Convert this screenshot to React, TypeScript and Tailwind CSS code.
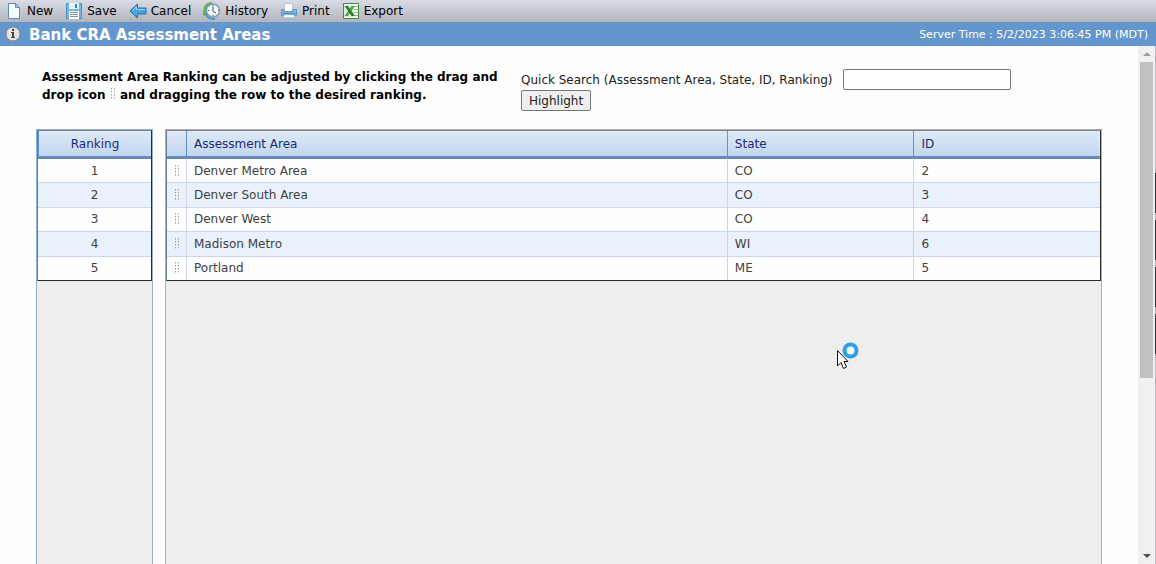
import type { ReactNode } from "react";

const areas = [
  { name: "Denver Metro Area", state: "CO", id: 2 },
  { name: "Denver South Area", state: "CO", id: 3 },
  { name: "Denver West", state: "CO", id: 4 },
  { name: "Madison Metro", state: "WI", id: 6 },
  { name: "Portland", state: "ME", id: 5 },
];

function NewIcon() {
  return (
    <svg width="18" height="18" viewBox="0 0 18 18" aria-hidden="true">
      <path d="M3.5 1.5h7l4 4v11h-11z" fill="#f6fbff" stroke="#5b8fb5" />
      <path d="M10.5 1.5v4h4z" fill="#a9cfe8" stroke="#5b8fb5" />
    </svg>
  );
}

function SaveIcon() {
  return (
    <svg width="18" height="18" viewBox="0 0 18 18" aria-hidden="true">
      <path d="M1.5 1.5h15v15h-15z" fill="#6fb6e2" stroke="#4a93c4" />
      <rect x="4" y="1" width="10" height="6" fill="#e4f2fa" />
      <rect x="10" y="2" width="2" height="4" fill="#3585bd" />
      <rect x="4" y="9" width="10" height="8" fill="#fff" />
      <path d="M5 10.5h8M5 12.5h8M5 14.5h8" stroke="#8b9299" />
    </svg>
  );
}

function CancelIcon() {
  return (
    <svg width="18" height="18" viewBox="0 0 18 18" aria-hidden="true">
      <path d="M1 9l7.5-7v4H17v6H8.5v4z" fill="#4ba3df" stroke="#2473ad" strokeLinejoin="round" />
      <path d="M3.5 8.5l4-3.500v2.500h8.500" fill="none" stroke="#9ed4f5" />
    </svg>
  );
}

function HistoryIcon() {
  return (
    <svg width="18" height="18" viewBox="0 0 18 18" aria-hidden="true">
      <path d="M9 .8C4 0 .8 4 1 8.500L.5 13l5-.5z" fill="#62bd4a" stroke="#398b2d" strokeWidth=".6" />
      <path d="M3 12c1 4 5 5.500 9 4.500" fill="none" stroke="#3e98d0" strokeWidth="2" />
      <circle cx="10" cy="8.500" r="6.500" fill="#f5f8fa" stroke="#7c9eb3" strokeWidth="1.500" />
      <path d="M10 4.500v5l3 1.500M10 3v1M15 8.500h1M10 13v1M5 8.500h1" fill="none" stroke="#34556b" />
    </svg>
  );
}

function PrintIcon() {
  return (
    <svg width="18" height="18" viewBox="0 0 18 18" aria-hidden="true">
      <path d="M4.500 1.500h8v8h-8z" fill="#fff" stroke="#b9c5d0" />
      <path d="M1.500 7.500h2.500v2h9v-2h3.500v6h-15z" fill="#7db8e2" stroke="#5b97c4" />
      <path d="M3 12h12" stroke="#275477" />
      <path d="M4 12.500h10l1 3.500H3z" fill="#eef6fc" stroke="#8fb5d1" />
    </svg>
  );
}

function ExportIcon() {
  return (
    <svg width="18" height="18" viewBox="0 0 18 18" aria-hidden="true">
      <path d="M1.500 1.500h15v15h-15z" fill="#f4faf1" stroke="#3f8a3f" />
      <path d="M12 4.500h4M12 7.500h4M12 10.500h4M12 13.500h4" stroke="#8cb987" />
      <path d="M2 3h10v12H2z" fill="#dcefd6" />
      <path d="M9.500 4h3.500L6 14H2.500z" fill="#57a851" />
      <path d="M2.500 4H6l7 10H9.500z" fill="#2f7d32" />
    </svg>
  );
}

function InfoIcon() {
  return (
    <svg width="16" height="16" viewBox="0 0 16 16" aria-hidden="true">
      <circle cx="8" cy="8" r="7" fill="#e4e4e2" stroke="#8b8783" />
      <path d="M7 3h2v2H7zM6 6h3v5h1v1H6v-1h1V7H6z" fill="#444" />
    </svg>
  );
}

function DragIcon({ className }: { className?: string }) {
  return (
    <svg width="6" height="12" viewBox="0 0 6 12" className={className} aria-hidden="true">
      {[0, 3, 6, 9].map((y) => (
        <g key={y}>
          <path d={`M1 ${y}h1v1h-1zM4 ${y}h1v1h-1z`} fill="#9a9a9a" />
          <path d={`M1 ${y + 1}h1v1h-1zM4 ${y + 1}h1v1h-1z`} fill="#d0d0d0" />
        </g>
      ))}
    </svg>
  );
}

const tools: { label: string; icon: ReactNode }[] = [
  { label: "New", icon: <NewIcon /> },
  { label: "Save", icon: <SaveIcon /> },
  { label: "Cancel", icon: <CancelIcon /> },
  { label: "History", icon: <HistoryIcon /> },
  { label: "Print", icon: <PrintIcon /> },
  { label: "Export", icon: <ExportIcon /> },
];

function Toolbar() {
  return (
    <div className="flex h-[22px] shrink-0 items-center gap-3 bg-linear-to-b from-[#d9dce4] to-[#b1b4bb] pl-[5px]">
      {tools.map((tool) => (
        <button key={tool.label} type="button" className="flex items-center gap-1 whitespace-nowrap text-black">
          {tool.icon}
          {tool.label}
        </button>
      ))}
    </div>
  );
}

function TitleBar() {
  return (
    <header className="flex h-6 shrink-0 items-center bg-[#6496cd] pr-2 pl-[5px] text-white">
      <InfoIcon />
      <h1 className="ml-2 pt-px text-[15px] font-bold">Bank CRA Assessment Areas</h1>
      <p className="ml-auto pt-px text-[11px]">Server Time : 5/2/2023 3:06:45 PM (MDT)</p>
    </header>
  );
}

const tableClass =
  "h-[151px] w-full border-separate border-spacing-0 border border-t-[#7b8088] border-r-[#2b2b2b] border-b-[#2b2b2b] border-l-[#6b7c92] bg-[#fefefe]";
const headRowClass = "h-[27px] bg-linear-to-b from-[#dfe9f7] to-[#bfd5f0] text-[#1b2a7a]";
const headCellClass = "border-b-2 border-b-[#5b8fd2] font-normal";
const bodyRowClass = "group h-6 even:bg-[#e9f1fc]";
const cellClass = "border-t border-t-[#cbd6e8] group-first:border-t-[#7b8088]";

function RankingTable() {
  return (
    <div className="w-[117px] shrink-0 border border-b-0 border-[#8fb3d4] bg-[#eeeeed]">
      <table className={tableClass}>
        <thead>
          <tr className={headRowClass}>
            <th className={`${headCellClass} border-l border-l-[#5b8fd2]`}>Ranking</th>
          </tr>
        </thead>
        <tbody>
          {areas.map((area, index) => (
            <tr key={area.name} className={bodyRowClass}>
              <td className={`${cellClass} text-center`}>{index + 1}</td>
            </tr>
          ))}
        </tbody>
      </table>
    </div>
  );
}

function AreaTable() {
  return (
    <div className="min-w-0 flex-1 border border-b-0 border-[#acb0b5] bg-[#eeeeed]">
      <table className={`${tableClass} table-fixed text-left`}>
        <colgroup>
          <col className="w-[19px]" />
          <col />
          <col className="w-[20%]" />
          <col className="w-[20%]" />
        </colgroup>
        <thead>
          <tr className={headRowClass}>
            <th className={headCellClass} aria-label="Drag" />
            <th className={`${headCellClass} border-l border-l-[#5b8fd2] px-[7px]`}>Assessment Area</th>
            <th className={`${headCellClass} border-l border-l-[#7d8ca3] px-[7px]`}>State</th>
            <th className={`${headCellClass} border-l border-l-[#7d8ca3] px-[7px]`}>ID</th>
          </tr>
        </thead>
        <tbody>
          {areas.map((area) => (
            <tr key={area.name} className={bodyRowClass}>
              <td className={cellClass}>
                <DragIcon className="mx-auto" />
              </td>
              <td className={`${cellClass} border-l border-l-[#cbd6f0] px-[7px]`}>{area.name}</td>
              <td className={`${cellClass} border-l border-l-[#cdd3da] px-[7px]`}>{area.state}</td>
              <td className={`${cellClass} border-l border-l-[#cdd3da] px-[7px]`}>{area.id}</td>
            </tr>
          ))}
        </tbody>
      </table>
    </div>
  );
}

function ScrollBar() {
  return (
    <div className="flex w-[17px] shrink-0 flex-col items-center bg-[#f0f0f2]">
      <svg width="16" height="16" viewBox="0 0 16 16" aria-hidden="true">
        <path d="M4 10l4-4 4 4z" fill="#a0a0a0" />
      </svg>
      <div className="h-[61%] w-[13px] bg-[#c1c1c3]" />
      <svg width="16" height="16" viewBox="0 0 16 16" className="mt-auto" aria-hidden="true">
        <path d="M4 6l4 4 4-4z" fill="#505050" />
      </svg>
    </div>
  );
}

// Dark notches along the right window edge
function WindowEdge() {
  return (
    <div className="flex w-px shrink-0 flex-col gap-[7px] bg-[#b4bac4] pt-[127px]">
      {[0, 1, 2, 3].map((n) => (
        <div key={n} className="h-10 bg-[#2f333b]" />
      ))}
    </div>
  );
}

function BusyCursor() {
  return (
    <svg width="24" height="28" viewBox="0 0 24 28" className="absolute top-[342px] left-[836px]" aria-hidden="true">
      <circle cx="14.500" cy="8.500" r="6" fill="#f4faff" stroke="#339ee8" strokeWidth="4" />
      <path d="M1.500 8.500v15.500l3.500-3.500 2.500 6 3-1.500-2.500-5.500H12z" fill="#fff" stroke="#111" />
    </svg>
  );
}

export default function App() {
  return (
    <div className="relative flex h-screen flex-col overflow-hidden bg-[#fefefe] font-['DejaVu_Sans',Verdana,sans-serif] text-[12px] leading-4 text-[#404040]">
      <Toolbar />
      <TitleBar />
      <div className="flex min-h-0 flex-1">
        <main className="flex min-w-0 flex-1 flex-col pr-9 pl-9">
          <div className="flex h-[83px] shrink-0 items-start pl-[6px]">
            <p className="mt-[22px] w-[479px] shrink-0 leading-[18px] font-bold text-black">
              Assessment Area Ranking can be adjusted by clicking the drag and
              <br />
              drop icon <DragIcon className="inline-block align-[-1px]" /> and dragging the row to the desired ranking.
            </p>
            <div className="mt-[23px]">
              <div className="flex items-center gap-1">
                <label htmlFor="quick-search" className="min-w-[318px] whitespace-nowrap text-[#222]">
                  Quick Search (Assessment Area, State, ID, Ranking)
                </label>
                <input
                  id="quick-search"
                  type="text"
                  className="h-[21px] w-[168px] rounded-[2px] border border-[#767676] bg-white px-1"
                />
              </div>
              <button
                type="button"
                className="h-[21px] rounded-[2px] border border-[#767676] bg-[#efefef] px-[7px] text-[#222]"
              >
                Highlight
              </button>
            </div>
          </div>
          <div className="flex min-h-0 flex-1 gap-3">
            <RankingTable />
            <AreaTable />
          </div>
        </main>
        <ScrollBar />
        <WindowEdge />
      </div>
      <BusyCursor />
    </div>
  );
}
